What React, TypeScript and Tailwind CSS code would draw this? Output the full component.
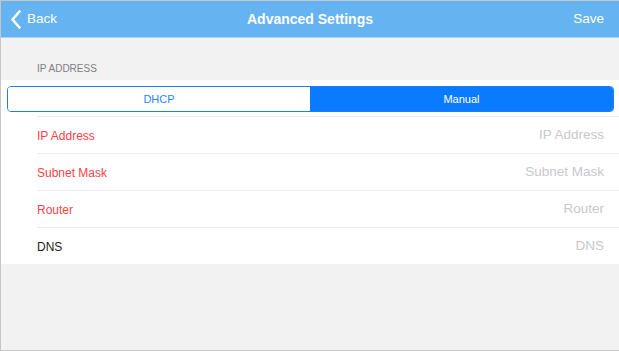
import React from "react";

const rows = [
  { label: "IP Address", red: true },
  { label: "Subnet Mask", red: true },
  { label: "Router", red: true },
  { label: "DNS", red: false },
];

export default function App() {
  return (
    <div
      className="w-[619px] h-[351px] bg-[#f2f2f2] border-t border-l border-b border-[#c6c6c6] flex flex-col overflow-hidden"
      style={{ fontFamily: '"Liberation Sans", Arial, sans-serif' }}
    >
      <div className="h-[37px] shrink-0 bg-[#66b3f2] border-b border-[#a9d2f6] flex items-center justify-between pl-[9px] pr-[15px] relative">
        <div className="flex items-center gap-[5px] text-white text-[13.5px] pt-[1px]">
          <svg width="12" height="19" viewBox="0 0 12 19" fill="none">
            <path d="M9.5 1.5L2.5 9.5L9.5 17.5" stroke="white" strokeWidth="2.6" strokeLinecap="round" strokeLinejoin="round" />
          </svg>
          <span>Back</span>
        </div>
        <div className="absolute left-0 right-0 text-center text-white text-[14px] font-bold pointer-events-none pt-[1px]">
          Advanced Settings
        </div>
        <div className="text-white text-[13.5px] pt-[1px]">Save</div>
      </div>
      <div className="h-[42px] shrink-0 flex items-end pb-[4px] pl-[36px] text-[10px] text-[#808080]">
        IP ADDRESS
      </div>
      <div className="bg-white flex flex-col">
        <div className="pt-[6px] pl-[6px] pr-[5px] pb-[4px]">
          <div className="flex h-[26px] border border-[#1b7ffb] rounded-[4px] overflow-hidden text-[11px]">
            <div className="w-[302px] flex items-center justify-center text-[#2b86fb] bg-white">DHCP</div>
            <div className="flex-1 flex items-center justify-center text-white bg-[#0a7bff]">Manual</div>
          </div>
        </div>
        {rows.map((r) => (
          <div key={r.label} className="pl-[36px]">
            <div className="h-[37px] flex items-center justify-between pr-[15px] border-t border-[#ececec]">
              <span className={r.red ? "text-[12px] text-[#f8424a] pt-[1px]" : "text-[12px] text-[#222] pt-[1px]"}>{r.label}</span>
              <span className="text-[13.5px] text-[#c8c8cd] pt-[1px]">{r.label}</span>
            </div>
          </div>
        ))}
      </div>
    </div>
  );
}
